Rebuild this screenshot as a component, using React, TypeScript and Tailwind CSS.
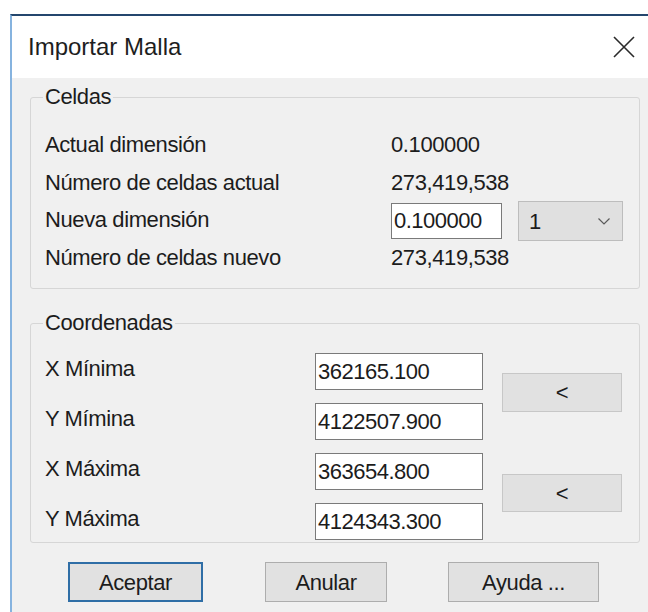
import React from 'react';

const font = { fontFamily: '"Liberation Sans", Arial, sans-serif' };

const Field = ({ value, width }: { value: string; width: string }) => (
    <input
        readOnly
        value={value}
        className={`${width} h-[37px] border border-[#7a7a7a] bg-white pl-[2px] text-[22px] tracking-[-0.5px] text-[#1c1c1c] outline-none`}
    />
);

const GrayButton = ({ children, className = '' }: { children: React.ReactNode; className?: string }) => (
    <button className={`bg-[#e1e1e1] text-[22px] tracking-[-0.4px] text-[#1c1c1c] ${className}`}>{children}</button>
);

export default function App() {
    const celdas = [
        { label: 'Actual dimensión', value: '0.100000', h: 'h-[38px]' },
        { label: 'Número de celdas actual', value: '273,419,538', h: 'h-[38px]' },
    ];

    const coords = [
        { label: 'X Mínima', value: '362165.100' },
        { label: 'Y Mímina', value: '4122507.900' },
        { label: 'X Máxima', value: '363654.800' },
        { label: 'Y Máxima', value: '4124343.300' },
    ];

    return (
        <div className="w-[648px] h-[612px] bg-white overflow-hidden" style={font}>
            {/* Dialog window */}
            <div className="ml-[10px] mt-[14px] w-[650px] h-[620px] border-t-2 border-l-2 border-t-[#24466d] border-l-[#86b3df] bg-[#f0f0f0] flex flex-col">
                {/* Title bar */}
                <div className="h-[62px] bg-white flex items-center justify-between pl-[16px] pr-[25px]">
                    <span className="text-[24px] text-[#1e1e1e]">Importar Malla</span>
                    <svg width="22" height="22" viewBox="0 0 22 22">
                        <path d="M1 1 L21 21 M21 1 L1 21" stroke="#2a2a2a" strokeWidth="1.6" fill="none" />
                    </svg>
                </div>

                <div className="pl-[18px] pr-[20px] pt-[7px] flex flex-col text-[22px] tracking-[-0.4px] text-[#1c1c1c]">
                    {/* Celdas */}
                    <fieldset className="border border-[#d6d6d6] rounded-[3px] pl-[14px] pt-[16px] pb-[15px]">
                        <legend className="-ml-[2px] px-[2px] leading-[24px]">Celdas</legend>
                        {celdas.map((row) => (
                            <div key={row.label} className={`${row.h} flex items-center`}>
                                <span className="w-[346px]">{row.label}</span>
                                <span>{row.value}</span>
                            </div>
                        ))}
                        <div className="h-[40px] flex items-center">
                            <span className="w-[346px] pb-[4px]">Nueva dimensión</span>
                            <input
                                readOnly
                                value="0.100000"
                                className="w-[111px] h-[36px] border border-[#7a7a7a] bg-white pl-[2px] text-[22px] tracking-[-0.5px] text-[#1c1c1c] outline-none"
                            />
                            <div className="ml-[16px] w-[105px] h-[40px] border border-[#bdbdbd] bg-[#e0e0e0] flex items-center justify-between pl-[10px] pr-[12px]">
                                <span>1</span>
                                <svg width="12" height="7" viewBox="0 0 12 7">
                                    <path d="M0.5 0.5 L6 6 L11.5 0.5" stroke="#5a5a5a" strokeWidth="1.2" fill="none" />
                                </svg>
                            </div>
                        </div>
                        <div className="h-[32px] flex items-center">
                            <span className="w-[346px]">Número de celdas nuevo</span>
                            <span>273,419,538</span>
                        </div>
                    </fieldset>

                    {/* Coordenadas */}
                    <fieldset className="mt-[22px] border border-[#d6d6d6] rounded-[3px] pl-[14px] pt-[18px] pb-[2px] flex">
                        <legend className="-ml-[2px] px-[2px] leading-[24px]">Coordenadas</legend>
                        <div className="flex">
                            <div className="flex flex-col gap-[13px]">
                                {coords.map((row) => (
                                    <div key={row.label} className="h-[37px] flex items-center">
                                        <span className="w-[270px] leading-none pb-[6px]">{row.label}</span>
                                        <Field value={row.value} width="w-[168px]" />
                                    </div>
                                ))}
                            </div>
                            <div className="ml-[19px] pt-[20px] flex flex-col gap-[62px]">
                                <GrayButton className="w-[120px] h-[39px] border border-[#c7c7c7] text-[18px]">&lt;</GrayButton>
                                <GrayButton className="w-[120px] h-[38px] border border-[#c7c7c7] text-[18px]">&lt;</GrayButton>
                            </div>
                        </div>
                    </fieldset>
                </div>

                {/* Dialog buttons */}
                <div className="mt-[19px] pl-[56px] flex">
                    <GrayButton className="w-[135px] h-[40px] border-2 border-[#2f6ea6]">Aceptar</GrayButton>
                    <GrayButton className="ml-[62px] w-[122px] h-[40px] border border-[#adadad]">Anular</GrayButton>
                    <GrayButton className="ml-[61px] w-[151px] h-[40px] border border-[#adadad]">Ayuda ...</GrayButton>
                </div>
            </div>
        </div>
    );
}
